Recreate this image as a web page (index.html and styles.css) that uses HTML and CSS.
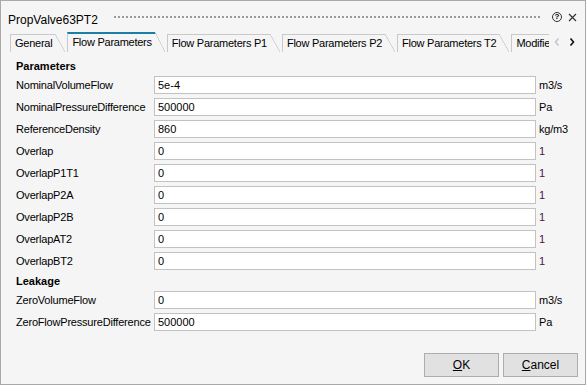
FILE: index.html
```html
<!DOCTYPE html>
<html>
<head>
  <title>PropValve63PT2</title>
  <link rel="stylesheet" href="styles.css">
</head>
<body>
  <div class="window">
    <div class="titlebar">
      <span class="title">PropValve63PT2</span>
      <span class="grip"></span>
      <span class="help">?</span>
      <svg class="close" width="9" height="9" viewBox="0 0 9 9">
        <path d="M1 1 L8 8 M8 1 L1 8" stroke="#333" stroke-width="1.2" fill="none"/>
      </svg>
    </div>

    <div class="tabstrip">
      <div class="tabs">
        <div class="tab">General</div>
        <div class="tab active">Flow Parameters</div>
        <div class="tab">Flow Parameters P1</div>
        <div class="tab">Flow Parameters P2</div>
        <div class="tab">Flow Parameters T2</div>
        <div class="tab">Modifiers</div>
      </div>
      <div class="scroller">
        <svg width="6" height="8" viewBox="0 0 6 8"><path d="M4.5 0.5 L1.5 4 L4.5 7.5" stroke="#c8c8c8" stroke-width="1.6" fill="none"/></svg>
        <svg width="6" height="8" viewBox="0 0 6 8"><path d="M1.5 0.5 L4.5 4 L1.5 7.5" stroke="#111" stroke-width="1.6" fill="none"/></svg>
      </div>
    </div>

    <div class="page">
      <div class="group-title">Parameters</div>
      <div class="row"><label>NominalVolumeFlow</label><input type="text" value="5e-4"><span class="unit">m3/s</span></div>
      <div class="row"><label>NominalPressureDifference</label><input type="text" value="500000"><span class="unit">Pa</span></div>
      <div class="row"><label>ReferenceDensity</label><input type="text" value="860"><span class="unit">kg/m3</span></div>
      <div class="row"><label>Overlap</label><input type="text" value="0"><span class="unit one">1</span></div>
      <div class="row"><label>OverlapP1T1</label><input type="text" value="0"><span class="unit one">1</span></div>
      <div class="row"><label>OverlapP2A</label><input type="text" value="0"><span class="unit one">1</span></div>
      <div class="row"><label>OverlapP2B</label><input type="text" value="0"><span class="unit one">1</span></div>
      <div class="row"><label>OverlapAT2</label><input type="text" value="0"><span class="unit one">1</span></div>
      <div class="row"><label>OverlapBT2</label><input type="text" value="0"><span class="unit one">1</span></div>

      <div class="group-title">Leakage</div>
      <div class="row"><label>ZeroVolumeFlow</label><input type="text" value="0"><span class="unit">m3/s</span></div>
      <div class="row"><label>ZeroFlowPressureDifference</label><input type="text" value="500000"><span class="unit">Pa</span></div>
    </div>

    <div class="footer">
      <button><u>O</u>K</button>
      <button><u>C</u>ancel</button>
    </div>
  </div>
</body>
</html>
```

FILE: styles.css
```css
html, body {
  margin: 0;
  padding: 0;
  background: #f5f5f5;
}

body, input, button {
  font-family: "Liberation Sans", Arial, sans-serif;
  font-size: 11px;
  color: #000;
}

.window {
  width: 586px;
  height: 385px;
  box-sizing: border-box;
  border: 1px solid #a9a9a9;
  background: #f5f5f5;
  display: flex;
  flex-direction: column;
}

/* title bar */
.titlebar {
  height: 30px;
  display: flex;
  align-items: center;
  padding: 0 8px 0 7px;
}

.title {
  font-size: 12px;
  padding-top: 7px;
}

.grip {
  flex-grow: 1;
  height: 7px;
  margin: 5px 10px 0 15px;
  background-image: radial-gradient(circle, #9a9a9a 0.8px, transparent 1px);
  background-size: 4px 6px;
  background-position: 0 -1px;
}

.help {
  width: 8px;
  height: 8px;
  border: 1px solid #333;
  border-radius: 50%;
  font-size: 8px;
  line-height: 8px;
  text-align: center;
  font-weight: bold;
  margin: 2px 6px 0 0;
}

.close {
  margin-top: 2px;
}

/* tabs */
.tabstrip {
  height: 21px;
  display: flex;
  align-items: flex-end;
  padding-left: 9px;
}

.tabs {
  flex: 1 1 0;
  min-width: 0;
  display: flex;
  align-items: flex-end;
  overflow: hidden;
  height: 21px;
}

.tab {
  position: relative;
  flex-shrink: 0;
  height: 17px;
  line-height: 17px;
  border-left: 1px solid #c9c9c9;
  border-top: 1px solid #c9c9c9;
  padding: 0 13px 0 4px;
  margin-right: 2px;
  white-space: nowrap;
  letter-spacing: -0.25px;
}

.tab::after {
  content: '';
  position: absolute;
  right: 0;
  top: -1px;
  width: 10px;
  bottom: 0;
  background: linear-gradient(to top right, transparent calc(50% - 0.7px), #c9c9c9 50%, #f5f5f5 calc(50% + 0.7px));
}

.tab.active {
  height: 18px;
  line-height: 17px;
  border-top: 2px solid #1a7ea6;
}

.tab.active::after {
  top: -2px;
}

.scroller {
  flex: 0 0 36px;
  height: 21px;
  display: flex;
  align-items: center;
  gap: 9px;
  padding-left: 5px;
  box-sizing: border-box;
}

/* form */
.page {
  padding: 4px 0 0 15px;
  display: flex;
  flex-direction: column;
}

.group-title {
  height: 20px;
  line-height: 20px;
  font-weight: bold;
}

.row {
  display: grid;
  grid-template-columns: 138px 382px auto;
  height: 18px;
  margin-top: 4px;
  align-items: center;
  letter-spacing: -0.2px;
}

.group-title + .row {
  margin-top: 0;
}

.row + .group-title {
  margin-top: 1px;
}

.row input {
  height: 18px;
  box-sizing: border-box;
  border: 1px solid #c2c2c2;
  background: #fff;
  padding: 0 3px;
  margin: 0;
  font-size: 11px;
  letter-spacing: 0;
  outline: none;
}

.unit {
  padding-left: 3px;
}

.unit.one {
  color: #4e1440;
}

/* buttons */
.footer {
  margin-top: auto;
  display: flex;
  justify-content: flex-end;
  gap: 4px;
  padding: 0 7px 7px 0;
}

.footer button {
  width: 75px;
  height: 24px;
  background: #e1e1e1;
  border: 1px solid #adadad;
  padding: 0;
  font-size: 12px;
}
```
